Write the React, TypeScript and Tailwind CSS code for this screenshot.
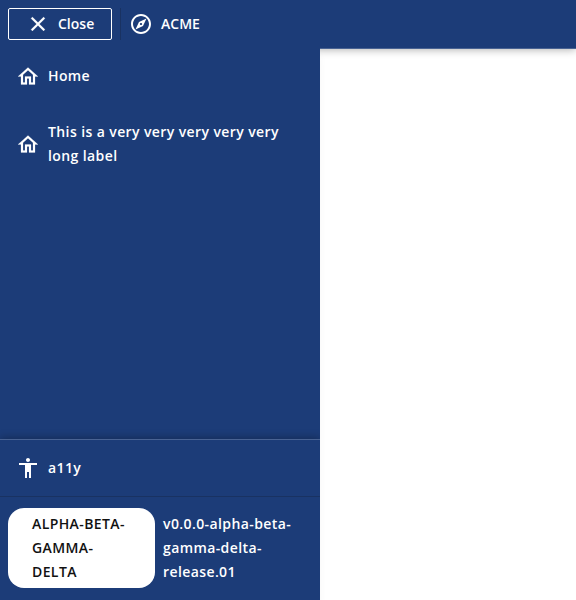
import type { ReactNode } from "react";

function Icon({ path, bold = false }: { path: string; bold?: boolean }) {
  return (
    <svg
      viewBox="0 0 24 24"
      className={bold ? "size-6 shrink-0 fill-current stroke-current stroke-[0.2]" : "size-6 shrink-0 fill-current"}
      aria-hidden="true"
    >
      <path d={path} />
    </svg>
  );
}

const icons = {
  close:
    "M19 6.41 17.59 5 12 10.59 6.41 5 5 6.41 10.59 12 5 17.59 6.41 19 12 13.41 17.59 19 19 17.59 13.41 12z",
  explore:
    "M12 2C6.48 2 2 6.48 2 12s4.48 10 10 10 10-4.48 10-10S17.52 2 12 2zm0 18c-4.41 0-8-3.59-8-8s3.59-8 8-8 8 3.59 8 8-3.59 8-8 8zm-5.5-2.5 7.51-3.49L17.5 6.5 9.99 9.99 6.5 17.5zm5.5-6.6c.61 0 1.1.49 1.1 1.1s-.49 1.1-1.1 1.1-1.1-.49-1.1-1.1.49-1.1 1.1-1.1z",
  home: "m12 6.19 5 4.5v7.81h-2v-6H9v6H7v-7.81l5-4.5M12 3.5 2 12.5h3v8h6v-6h2v6h6v-8h3L12 3.5z",
  accessibility:
    "M12 2c1.1 0 2 .9 2 2s-.9 2-2 2-2-.9-2-2 .9-2 2-2zm9 7h-6v13h-2v-6h-2v6H9V9H3V7h18v2z",
};

function NavItem({ icon, bold, children }: { icon: string; bold?: boolean; children: ReactNode }) {
  return (
    <a className="flex items-center gap-2 px-4 py-4">
      <Icon path={icon} bold={bold} />
      <span>{children}</span>
    </a>
  );
}

export default function App() {
  return (
    <div className="flex h-[600px] w-[576px] flex-col overflow-hidden bg-white font-['Open_Sans',sans-serif] text-sm leading-6 font-semibold text-white">
      <header className="flex h-[49px] shrink-0 items-center border-b border-[#496393] bg-[#1c3c78] shadow-[0_1px_8px_rgba(0,0,0,0.3)]">
        <button className="ml-2 flex h-8 w-26 items-center gap-2 rounded-[2px] border border-white pl-[17px]">
          <Icon path={icons.close} bold />
          <span>Close</span>
        </button>
        <div className="ml-2 h-8 w-px bg-[#193262]" />
        <div className="ml-2 flex items-center gap-2">
          <Icon path={icons.explore} />
          <span>ACME</span>
        </div>
      </header>
      <div className="z-10 -mt-px flex min-h-0 flex-1 tracking-[0.4px]">
        <aside className="flex w-80 shrink-0 flex-col bg-[#1c3c78] shadow-[0_8px_8px_rgba(0,0,0,0.04)]">
          <nav className="flex-1">
            <NavItem icon={icons.home} bold>Home</NavItem>
            <NavItem icon={icons.home} bold>This is a very very very very very long label</NavItem>
          </nav>
          <div className="border-t border-[#496393] shadow-[0_-1px_8px_rgba(0,0,0,0.3)] [clip-path:inset(-12px_0_0_0)]">
            <NavItem icon={icons.accessibility}>a11y</NavItem>
            <div className="flex h-[104px] items-start gap-2 border-t border-[#193262] px-2 pt-[11px]">
              <div className="w-[147px] shrink-0 rounded-2xl bg-white px-6 py-1 text-[#111]">
                ALPHA-BETA-GAMMA-DELTA
              </div>
              <div className="pt-1">v0.0.0-alpha-beta-gamma-delta-release.01</div>
            </div>
          </div>
        </aside>
        <main className="flex-1" />
      </div>
    </div>
  );
}
